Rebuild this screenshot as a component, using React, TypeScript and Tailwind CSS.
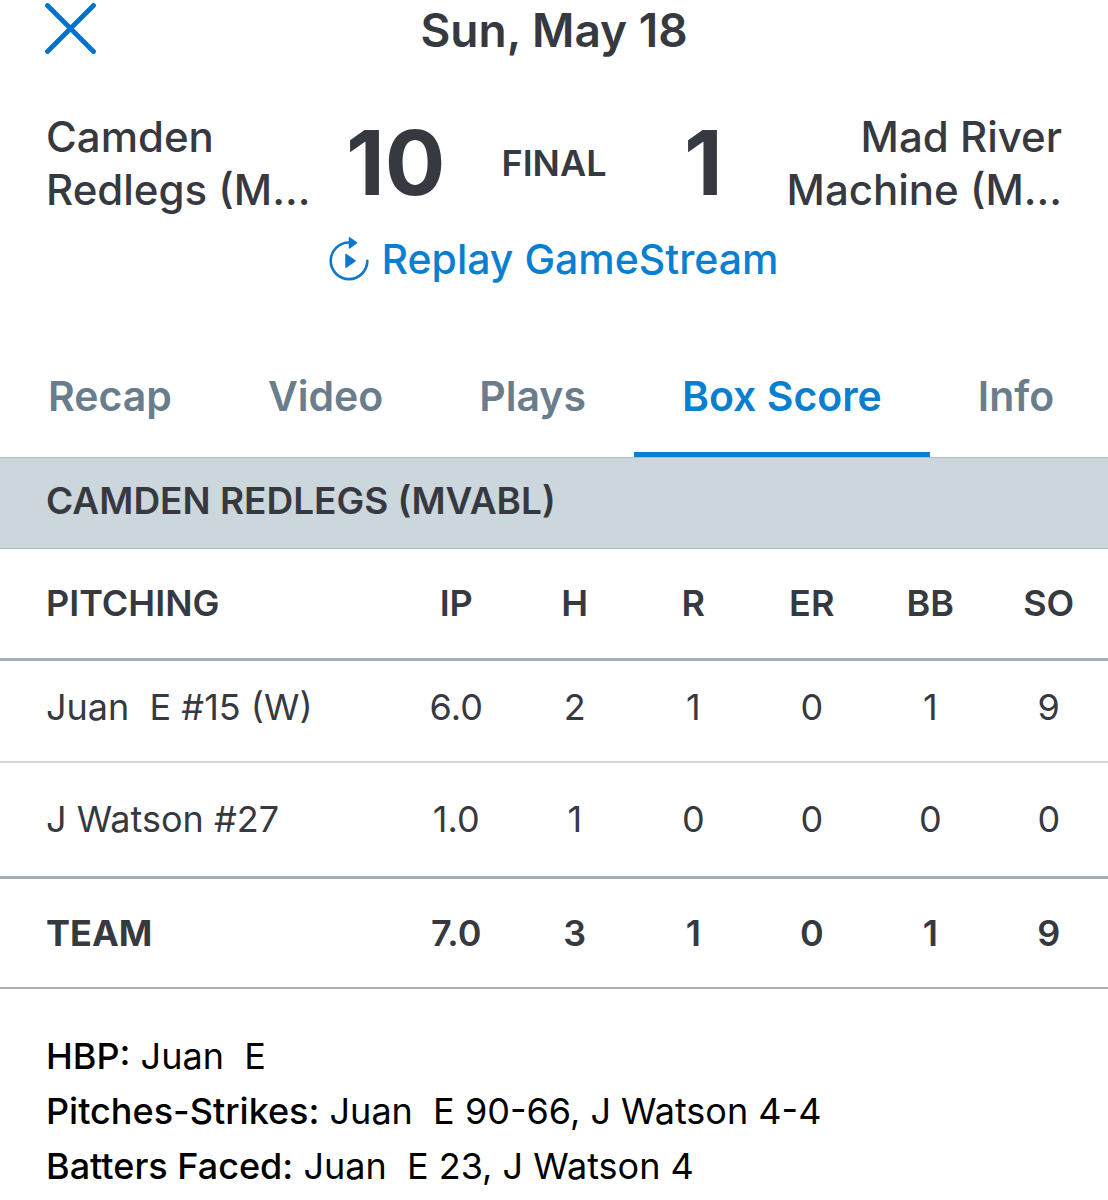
import React from 'react';

const columns = ['IP', 'H', 'R', 'ER', 'BB', 'SO'];

const pitchers = [
  { name: 'Juan\u00a0 E #15 (W)', stats: ['6.0', '2', '1', '0', '1', '9'], row: 'h-[103px] border-b-2 border-[#cdd7db] *:pb-2' },
  { name: 'J Watson #27', stats: ['1.0', '1', '0', '0', '0', '0'], row: 'h-[115px] border-b-3 border-[#a6afb6]' },
];

const teamTotals = ['7.0', '3', '1', '0', '1', '9'];

const notes = [
  { label: 'HBP:', text: 'Juan\u00a0 E' },
  { label: 'Pitches-Strikes:', text: 'Juan\u00a0 E 90-66, J Watson 4-4' },
  { label: 'Batters Faced:', text: 'Juan\u00a0 E 23, J Watson 4' },
];

const tabs = [
  { name: 'Recap', active: false },
  { name: 'Video', active: false },
  { name: 'Plays', active: false },
  { name: 'Box Score', active: true },
  { name: 'Info', active: false },
];

const CloseIcon = () => (
  <svg width="54" height="54" viewBox="0 0 54 54" fill="none" stroke="#0072cc" strokeWidth="4.8" strokeLinecap="round" aria-hidden="true">
    <path d="M4.500 2.500l46 46M50.500 2.500l-46 46" />
  </svg>
);

const ReplayIcon = () => (
  <svg width="40" height="46" viewBox="0 0 40 46" fill="none" aria-hidden="true">
    <path d="M20 6.500A18.300 18.300 0 1 0 38.300 24.800" stroke="#0a78cc" strokeWidth="2.600" strokeLinecap="round" />
    <path d="M20.500 1.800l7 5-7 5z" fill="#0a78cc" stroke="#0a78cc" strokeWidth="1.500" strokeLinejoin="round" />
    <path d="M17 18.500l9 6.300-9 6.300z" fill="#0a78cc" stroke="#0a78cc" strokeWidth="1.500" strokeLinejoin="round" />
  </svg>
);

const App: React.FC = () => {
  return (
    <div className="min-h-screen overflow-hidden bg-white font-['Inter',sans-serif] text-[#36393f]">
      {/* Title bar */}
      <header className="grid h-[60px] grid-cols-[1fr_auto_1fr] items-center px-[43px]">
        <button type="button" aria-label="Close" className="justify-self-start">
          <CloseIcon />
        </button>
        <h1 className="text-[46px] leading-[60px] font-semibold">Sun, May 18</h1>
      </header>

      {/* Score */}
      <section className="mt-[50px] flex items-center px-[46px] whitespace-nowrap">
        <p className="w-[270px] text-[42px] leading-[53px] font-medium">Camden<br />Redlegs (M...</p>
        <p className="w-[166px] pl-[30px] text-[90px] leading-[104px] font-bold">10</p>
        <p className="flex-1 text-center text-[36px] font-semibold">FINAL</p>
        <p className="w-[140px] pl-[58px] text-[90px] leading-[104px] font-bold">1</p>
        <p className="w-[296px] text-right text-[42px] leading-[53px] font-medium">Mad River<br />Machine (M...</p>
      </section>
      <div className="mt-4 flex justify-center">
        <a href="#replay" className="flex items-center gap-3 text-[41px] leading-[54px] font-medium text-[#0a7fd2]">
          <ReplayIcon />
          Replay GameStream
        </a>
      </div>

      {/* Tabs */}
      <nav className="mt-12 flex h-[123px] whitespace-nowrap">
        {tabs.map((tab) => (
          <a
            key={tab.name}
            href="#tab"
            className={
              tab.active
                ? 'flex items-center border-b-[5px] border-[#0a7fd2] px-12 pt-2 text-[41px] font-semibold text-[#0a7fd2]'
                : 'flex items-center border-b-[5px] border-transparent px-12 pt-2 text-[41px] font-semibold text-[#6a7d8c]'
            }
          >
            {tab.name}
          </a>
        ))}
      </nav>

      <h2 className="flex h-[92px] items-center border-y border-[#b3bec4] bg-[#ccd7dd] px-[46px] pb-1 text-[37px] font-semibold">
        CAMDEN REDLEGS (MVABL)
      </h2>

      {/* Pitching table */}
      <table className="w-full table-fixed border-collapse text-[36px]">
        <thead>
          <tr className="h-[110px] border-b-3 border-[#a6afb6]">
            <th scope="col" className="w-[397px] pl-[46px] text-left font-semibold">PITCHING</th>
            {columns.map((column) => (
              <th key={column} scope="col" className="font-semibold">{column}</th>
            ))}
          </tr>
        </thead>
        <tbody>
          {pitchers.map((pitcher) => (
            <tr key={pitcher.name} className={pitcher.row}>
              <th scope="row" className="pl-[46px] text-left font-normal whitespace-pre">{pitcher.name}</th>
              {pitcher.stats.map((stat, i) => (
                <td key={columns[i]} className="text-center">{stat}</td>
              ))}
            </tr>
          ))}
        </tbody>
        <tfoot>
          <tr className="h-[111px] border-b-2 border-[#a6afb6] font-semibold">
            <th scope="row" className="pl-[46px] text-left">TEAM</th>
            {teamTotals.map((stat, i) => (
              <td key={columns[i]} className="text-center">{stat}</td>
            ))}
          </tr>
        </tfoot>
      </table>

      {/* Game notes */}
      <section className="px-[46px] pt-10 text-[36px] leading-[55px] text-black">
        {notes.map((note) => (
          <p key={note.label}>
            <strong className="font-medium">{note.label}</strong> {note.text}
          </p>
        ))}
      </section>
    </div>
  );
};

export default App;
